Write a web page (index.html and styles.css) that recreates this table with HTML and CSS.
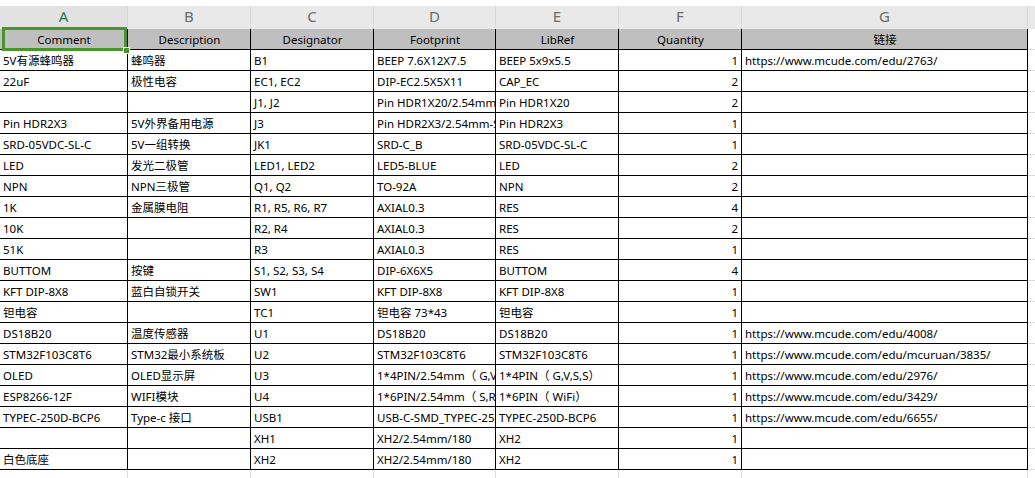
FILE: index.html
```html
<!DOCTYPE html>
<html lang="zh">
<head>
<meta charset="utf-8">
<title>BOM</title>
<link rel="stylesheet" href="styles.css">
</head>
<body>
<div class="sheet">
  <div class="letters">
    <div class="lt sel">A</div><div class="lt">B</div><div class="lt">C</div><div class="lt">D</div><div class="lt">E</div><div class="lt">F</div><div class="lt">G</div><div class="lt end"></div>
  </div>
  <div class="row head">
    <div class="c ctr">Comment</div><div class="c ctr">Description</div><div class="c ctr">Designator</div><div class="c ctr">Footprint</div><div class="c ctr">LibRef</div><div class="c ctr">Quantity</div><div class="c ctr">链接</div><div class="c x"></div>
  </div>
  <div class="row"><div class="c">5V有源蜂鸣器</div><div class="c">蜂鸣器</div><div class="c">B1</div><div class="c">BEEP 7.6X12X7.5</div><div class="c">BEEP 5x9x5.5</div><div class="c num">1</div><div class="c">https://www.mcude.com/edu/2763/</div><div class="c x"></div></div>
  <div class="row"><div class="c">22uF</div><div class="c">极性电容</div><div class="c">EC1, EC2</div><div class="c">DIP-EC2.5X5X11</div><div class="c">CAP_EC</div><div class="c num">2</div><div class="c"></div><div class="c x"></div></div>
  <div class="row"><div class="c"></div><div class="c"></div><div class="c">J1, J2</div><div class="c">Pin HDR1X20/2.54mm-S</div><div class="c">Pin HDR1X20</div><div class="c num">2</div><div class="c"></div><div class="c x"></div></div>
  <div class="row"><div class="c">Pin HDR2X3</div><div class="c">5V外界备用电源</div><div class="c">J3</div><div class="c">Pin HDR2X3/2.54mm-S</div><div class="c">Pin HDR2X3</div><div class="c num">1</div><div class="c"></div><div class="c x"></div></div>
  <div class="row"><div class="c">SRD-05VDC-SL-C</div><div class="c">5V一组转换</div><div class="c">JK1</div><div class="c">SRD-C_B</div><div class="c">SRD-05VDC-SL-C</div><div class="c num">1</div><div class="c"></div><div class="c x"></div></div>
  <div class="row"><div class="c">LED</div><div class="c">发光二极管</div><div class="c">LED1, LED2</div><div class="c">LED5-BLUE</div><div class="c">LED</div><div class="c num">2</div><div class="c"></div><div class="c x"></div></div>
  <div class="row"><div class="c">NPN</div><div class="c">NPN三极管</div><div class="c">Q1, Q2</div><div class="c">TO-92A</div><div class="c">NPN</div><div class="c num">2</div><div class="c"></div><div class="c x"></div></div>
  <div class="row"><div class="c">1K</div><div class="c">金属膜电阻</div><div class="c">R1, R5, R6, R7</div><div class="c">AXIAL0.3</div><div class="c">RES</div><div class="c num">4</div><div class="c"></div><div class="c x"></div></div>
  <div class="row"><div class="c">10K</div><div class="c"></div><div class="c">R2, R4</div><div class="c">AXIAL0.3</div><div class="c">RES</div><div class="c num">2</div><div class="c"></div><div class="c x"></div></div>
  <div class="row"><div class="c">51K</div><div class="c"></div><div class="c">R3</div><div class="c">AXIAL0.3</div><div class="c">RES</div><div class="c num">1</div><div class="c"></div><div class="c x"></div></div>
  <div class="row"><div class="c">BUTTOM</div><div class="c">按键</div><div class="c">S1, S2, S3, S4</div><div class="c">DIP-6X6X5</div><div class="c">BUTTOM</div><div class="c num">4</div><div class="c"></div><div class="c x"></div></div>
  <div class="row"><div class="c">KFT DIP-8X8</div><div class="c">蓝白自锁开关</div><div class="c">SW1</div><div class="c">KFT DIP-8X8</div><div class="c">KFT DIP-8X8</div><div class="c num">1</div><div class="c"></div><div class="c x"></div></div>
  <div class="row"><div class="c">钽电容</div><div class="c"></div><div class="c">TC1</div><div class="c">钽电容 73*43</div><div class="c">钽电容</div><div class="c num">1</div><div class="c"></div><div class="c x"></div></div>
  <div class="row"><div class="c">DS18B20</div><div class="c">温度传感器</div><div class="c">U1</div><div class="c">DS18B20</div><div class="c">DS18B20</div><div class="c num">1</div><div class="c">https://www.mcude.com/edu/4008/</div><div class="c x"></div></div>
  <div class="row"><div class="c">STM32F103C8T6</div><div class="c">STM32最小系统板</div><div class="c">U2</div><div class="c">STM32F103C8T6</div><div class="c">STM32F103C8T6</div><div class="c num">1</div><div class="c">https://www.mcude.com/edu/mcuruan/3835/</div><div class="c x"></div></div>
  <div class="row"><div class="c">OLED</div><div class="c">OLED显示屏</div><div class="c">U3</div><div class="c">1*4PIN/2.54mm（ G,V,S,S）</div><div class="c">1*4PIN（ G,V,S,S）</div><div class="c num">1</div><div class="c">https://www.mcude.com/edu/2976/</div><div class="c x"></div></div>
  <div class="row"><div class="c">ESP8266-12F</div><div class="c">WIFI模块</div><div class="c">U4</div><div class="c">1*6PIN/2.54mm（ S,R,T,V,G）</div><div class="c">1*6PIN（ WiFi）</div><div class="c num">1</div><div class="c">https://www.mcude.com/edu/3429/</div><div class="c x"></div></div>
  <div class="row"><div class="c">TYPEC-250D-BCP6</div><div class="c">Type-c 接口</div><div class="c">USB1</div><div class="c">USB-C-SMD_TYPEC-250D</div><div class="c">TYPEC-250D-BCP6</div><div class="c num">1</div><div class="c">https://www.mcude.com/edu/6655/</div><div class="c x"></div></div>
  <div class="row"><div class="c"></div><div class="c"></div><div class="c">XH1</div><div class="c">XH2/2.54mm/180</div><div class="c">XH2</div><div class="c num">1</div><div class="c"></div><div class="c x"></div></div>
  <div class="row"><div class="c">白色底座</div><div class="c"></div><div class="c">XH2</div><div class="c">XH2/2.54mm/180</div><div class="c">XH2</div><div class="c num">1</div><div class="c"></div><div class="c x"></div></div>
  <div class="row blank">
    <div class="c"></div><div class="c"></div><div class="c"></div><div class="c"></div><div class="c"></div><div class="c"></div><div class="c"></div><div class="c x"></div>
  </div>
  <div class="selection"><span class="handle"></span></div>
</div>
</body>
</html>
```

FILE: styles.css
```css
html, body {
  margin: 0;
  padding: 0;
  background: #ffffff;
}
body {
  font-family: "Noto Sans", "Noto Sans CJK SC", sans-serif;
  font-size: 11.5px;
  color: #000;
  overflow: hidden;
}
.sheet {
  position: relative;
  padding-top: 6px;
  width: 1035px;
  height: 478px;
  overflow: hidden;
}
.letters,
.row {
  display: grid;
  grid-template-columns: 128px 123px 123px 122px 123px 123px 286px 1fr;
}
.letters {
  height: 23px;
  background: #e9e9e9;
}
.lt {
  display: flex;
  align-items: center;
  justify-content: center;
  font-size: 15px;
  color: #6b6b6b;
  border-right: 1px solid #d6d6d6;
  line-height: 1;
  padding-bottom: 2px;
}
.lt.sel {
  color: #1f7a5c;
  background: #e2e2e2;
}
.lt.end {
  border-right: none;
}
.row {
  height: 21px;
}
.c {
  box-sizing: border-box;
  height: 21px;
  border-right: 1px solid #000;
  border-bottom: 1px solid #000;
  padding: 0 2px 0 3px;
  line-height: 21px;
  white-space: nowrap;
  overflow: hidden;
}
.c.ctr {
  text-align: center;
}
.c.num {
  text-align: right;
  padding-right: 3px;
}
.c.x {
  border-right: none;
  border-bottom: 1px solid #dcdcdc;
}
.head .c {
  background: #bfbfbf;
}
.head .c.x {
  background: #ffffff;
}
.blank .c {
  border-right: 1px solid #dcdcdc;
  border-bottom: none;
}
.blank .c.x {
  border-right: none;
}
.selection {
  position: absolute;
  left: 2px;
  top: 27px;
  width: 125px;
  height: 24px;
  box-sizing: border-box;
  border: 3px solid #48952b;
}
.handle {
  position: absolute;
  right: -6px;
  bottom: -6px;
  width: 5px;
  height: 5px;
  background: #48952b;
  border: 1px solid #ffffff;
}
```
